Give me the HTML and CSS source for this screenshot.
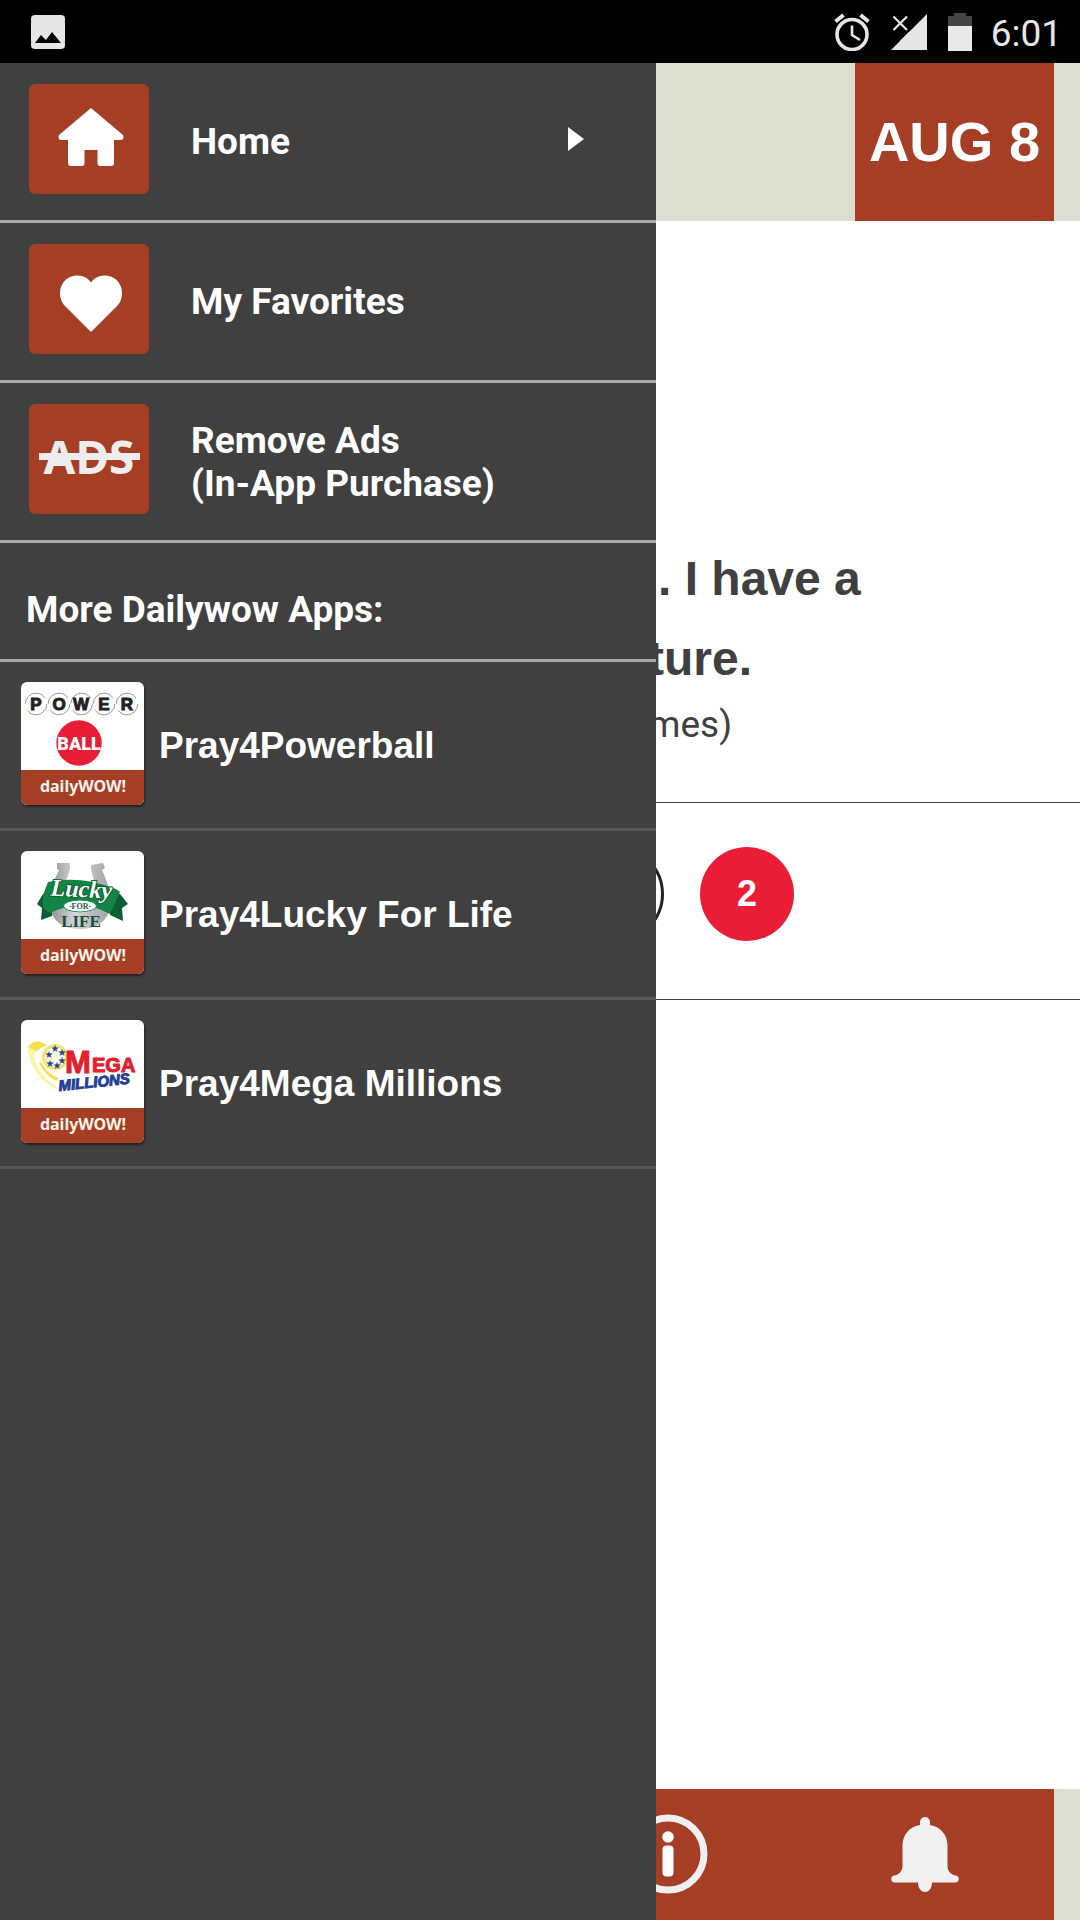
FILE: index.html
```html
<!DOCTYPE html>
<html lang="en">
<head>
<meta charset="utf-8">
<meta name="viewport" content="width=device-width, initial-scale=1">
<title>dailyWOW!</title>
<link rel="stylesheet" href="styles.css">
</head>
<body>
<div class="app">
  <div class="status">
    <svg class="status-picture" width="34" height="34" viewBox="0 0 34 34" aria-hidden="true">
      <rect width="34" height="34" rx="4" fill="#e6e6e6"/>
      <path d="M4 28 10 20 15 25 21 17 30 28z" fill="#000"/>
    </svg>
    <svg width="36" height="38" viewBox="0 0 36 38" aria-hidden="true">
      <g fill="none" stroke="#e6e6e6">
        <circle cx="18" cy="21.500" r="15" stroke-width="3.600"/>
        <path d="M18 12.500V22l8 5" stroke-width="2.600"/>
        <path d="M1.500 8.500 9.500 2M34.500 8.500 26.500 2" stroke-width="4"/>
      </g>
    </svg>
    <svg class="status-signal" width="36" height="38" viewBox="0 0 36 38" aria-hidden="true">
      <path d="M0 37 36 1V37z" fill="#e6e6e6"/>
      <path d="M0 0H18V17L9 26 0 20z" fill="#000"/>
      <path d="M18 19 9 28 18 28z" fill="#e6e6e6"/>
      <path d="M2.500 3.500 16 17M16 3.500 2.500 17" stroke="#e6e6e6" stroke-width="2.200" fill="none"/>
    </svg>
    <svg class="status-battery" width="24" height="38" viewBox="0 0 24 38" aria-hidden="true">
      <path d="M0 3H6V0H18V3H24V14H0z" fill="#444"/>
      <path d="M0 13H24V38H0z" fill="#e9e9e9"/>
    </svg>
    <span class="time">6:01</span>
  </div>

  <div class="body">
    <main class="page">
      <header class="page-head"><h1 class="date">AUG 8</h1></header>
      <section class="quote">
        <p class="quote-text">. I have a<br>ture.</p>
        <p class="quote-note">mes)</p>
      </section>
      <section class="balls">
        <span class="ball"></span>
        <span class="ball ball-red">2</span>
      </section>
      <footer class="tabs">
        <button class="tab tab-info" type="button" aria-label="Info">
          <svg width="80" height="80" viewBox="0 0 80 80">
            <circle cx="40" cy="40" r="36" fill="none" stroke="#f0f0f0" stroke-width="7"/>
            <circle cx="40" cy="23" r="5.800" fill="#fff"/>
            <rect x="34.500" y="31.500" width="11" height="31" rx="4" fill="#fff"/>
          </svg>
        </button>
        <button class="tab" type="button" aria-label="Reminders">
          <svg width="70" height="76" viewBox="0 0 70 76">
            <path fill="#f0f0f0" d="M30 9V6a5 5 0 0 1 10 0V9C51 11 57.500 19 57.500 30V50C57.500 55 61 59 66 59.500A3.600 3.600 0 0 1 66 66.500H42C42 72 39 76 35 76S28 72 28 66.500H4A3.600 3.600 0 0 1 4 59.500C9 59 12.500 55 12.500 50V30C12.500 19 19 11 30 9z"/>
          </svg>
        </button>
      </footer>
    </main>

    <nav class="drawer" aria-label="Menu">
      <a class="item" href="#home">
        <span class="tile">
          <svg width="120" height="110" viewBox="-29 -23 120 110" aria-hidden="true">
            <path fill="#fff" d="M33 1 65 28Q67 33 62 33H56V56Q56 59 53 59H42Q39.500 59 39.500 56V43H26.500V56Q26.500 59 24 59H13Q10 59 10 56V33H4Q-1 33 1 28z"/>
          </svg>
        </span>
        <span class="label">Home</span>
        <svg class="arrow" width="16" height="24" viewBox="0 0 16 24" aria-hidden="true"><path d="M0 0 16 12 0 24z" fill="#fff"/></svg>
      </a>
      <a class="item" href="#favorites">
        <span class="tile">
          <svg width="120" height="110" viewBox="-29 -27 120 110" aria-hidden="true">
            <path fill="#fff" d="M33 61 6 34C-2 24 2 6 18 4.500 25 4 30 7 33 11.500 36 7 41 4 48 4.500 64 6 68 24 60 34z"/>
          </svg>
        </span>
        <span class="label">My Favorites</span>
      </a>
      <a class="item" href="#remove-ads">
        <span class="tile">
          <svg width="120" height="110" viewBox="0 0 120 110" aria-hidden="true">
            <text x="60" y="70" text-anchor="middle" class="ads">ADS</text>
            <path d="M10 49H111V56H10z" fill="#ededed"/>
          </svg>
        </span>
        <span class="label">Remove Ads<br>(In-App Purchase)</span>
      </a>
      <h2 class="section">More Dailywow Apps:</h2>
      <a class="app-item" href="#powerball">
        <svg class="logo" width="123" height="123" viewBox="0 0 123 123" aria-hidden="true">
          <path d="M0 0H123V123H0z" fill="#fff"/>
          <g fill="none" stroke="#999" stroke-dasharray="27 7">
            <circle cx="15" cy="22" r="10.800"/><circle cx="38" cy="22" r="10.800"/><circle cx="60.500" cy="22" r="10.800"/><circle cx="83" cy="22" r="10.800"/><circle cx="106" cy="22" r="10.800"/>
          </g>
          <g class="power">
            <text x="15" y="28">P</text><text x="38" y="28">O</text><text x="60" y="28">W</text><text x="83" y="28">E</text><text x="106" y="28">R</text>
          </g>
          <circle cx="58" cy="61" r="22.700" fill="#e91d35"/>
          <text x="58" y="68" class="ball-word">BALL</text>
          <path d="M0 88H123V123H0z" fill="#a53e24"/>
          <text x="62" y="110" class="wow">dailyWOW!</text>
        </svg>
        <span class="app-name">Pray4Powerball</span>
      </a>
      <a class="app-item" href="#lucky">
        <svg class="logo" width="123" height="123" viewBox="0 0 123 123" aria-hidden="true">
          <defs><linearGradient id="steel"><stop offset="0" stop-color="#8d8d92"/><stop offset=".4" stop-color="#d5d5d9"/><stop offset="1" stop-color="#a2a2a7"/></linearGradient></defs>
          <path d="M0 0H123V123H0z" fill="#fff"/>
          <path d="M36 12H49V18L45 30C36 49 42 62 59 62S82 49 73 30L70 18V14L82 12 84 17 81 19C99 57 87 78 59 78S19 57 38 19L36 18z" fill="url(#steel)"/>
          <path d="M22 43 16 53 21 57 20 69 31 65V43zM99 43 107 53 101 57 102 70 89 64V43z" fill="#0b6032"/>
          <path d="M27 31Q60 24 95 38L99 41 89 63Q60 47 29 62L22 57 22 44z" fill="#128443"/>
          <ellipse cx="59" cy="55" rx="16.500" ry="6" fill="#fff" stroke="#128443" stroke-width="1"/>
          <g transform="rotate(3 60 45)"><text x="60" y="46" class="lucky">Lucky</text></g>
          <text x="59" y="58" class="lucky-for">-FOR-</text>
          <text x="60" y="76" class="lucky-life">LIFE</text>
          <path d="M0 88H123V123H0z" fill="#a53e24"/>
          <text x="62" y="110" class="wow">dailyWOW!</text>
        </svg>
        <span class="app-name">Pray4Lucky For Life</span>
      </a>
      <a class="app-item" href="#mega">
        <svg class="logo" width="123" height="123" viewBox="0 0 123 123" aria-hidden="true">
          <path d="M0 0H123V123H0z" fill="#fff"/>
          <path d="M24 25C12 17 5 24 8 36 12 53 25 66 41 71 24 60 11 45 14 33Z" fill="#fdf3a8"/>
          <path d="M7 27Q15 17 26 25L14 31zM20 42Q26 54 38 58L35 61Q23 54 18 43z" fill="#f4e04a"/>
          <circle cx="34" cy="37" r="13" fill="#f6e56a"/>
          <circle cx="34" cy="37" r="10" fill="#fffbe0"/>
          <g class="stars"><text x="34" y="32">★</text><text x="41" y="36">★</text><text x="41" y="44">★</text><text x="36" y="49">★</text><text x="29" y="47">★</text><text x="28" y="38">★</text></g>
          <g class="mega"><text x="44" y="53" class="mega-m">M</text><text x="71" y="52" class="mega-ega">EGA</text></g>
          <g transform="rotate(-6 38 71)"><text x="38" y="71" class="millions">MILLIONS</text></g>
          <path d="M0 88H123V123H0z" fill="#a53e24"/>
          <text x="62" y="110" class="wow">dailyWOW!</text>
        </svg>
        <span class="app-name">Pray4Mega Millions</span>
      </a>
    </nav>
  </div>
</div>
</body>
</html>
```
FILE: styles.css
```css
* { box-sizing: border-box; }
body { margin: 0; font-family: Roboto, sans-serif; color: #404040; background: #fff; }
h1, h2, p { margin: 0; }
a { color: inherit; text-decoration: none; }

.app { min-height: 100vh; display: flex; flex-direction: column; }

.status {
  height: 63px; padding: 0 18px 0 31px; background: #000; color: #e6e6e6;
  display: flex; align-items: center;
}
.status-picture { margin-right: auto; }
.status-signal { margin-left: 21px; }
.status-battery { margin-left: 21px; margin-right: 19px; }
.time { font-size: 37px; line-height: 44px; padding-top: 4px; }

.body { flex: 1; position: relative; display: flex; }
.page { flex: 1; display: flex; flex-direction: column; overflow: hidden; }

.page-head { height: 158px; padding-right: 26px; background: #dbddcf; display: flex; justify-content: flex-end; }
.date {
  width: 199px; background: #a53e24; color: #fff;
  display: flex; align-items: center; justify-content: center;
  font: bold 56px/64px "Liberation Sans", sans-serif;
}

.quote { padding: 318px 0 51px 60%; }
.quote-text { font: bold 48px/80px "Liberation Sans", sans-serif; text-indent: 10px; white-space: nowrap; }
.quote-note { font-size: 37px; line-height: 52px; }

.balls {
  height: 198px; padding-left: 568px; border: 1px solid #404040; border-width: 1px 0;
  display: flex; align-items: center; gap: 36px; padding-bottom: 14px;
}
.ball {
  width: 96px; height: 96px; border: 3px solid #222; border-radius: 50%;
  display: flex; align-items: center; justify-content: center;
  font: bold 36px/40px "Liberation Sans", sans-serif;
}
.ball-red { border: 0; width: 94px; height: 94px; background: #e91d35; color: #fff; }

.tabs {
  height: 131px; margin-top: auto; background: #a53e24; border-right: 26px solid #dbddcf; padding: 0 1px 2px 25px;
  display: grid; grid-template-columns: repeat(4, 1fr);
}
.tab { border: 0; padding: 0; background: none; display: flex; align-items: center; justify-content: center; }
.tab-info { grid-column: 3; }

.drawer { position: absolute; top: 0; bottom: 0; left: 0; width: 656px; background: #404040; color: #fff; }
.item {
  height: 160px; padding: 0 72px 5px 29px; border-bottom: 3px solid #a9a9a9;
  display: flex; align-items: center;
}
.tile {
  width: 120px; height: 110px; border-radius: 6px; background: #a53e24;
  display: flex; align-items: center; justify-content: center;
}
.label { margin-left: 42px; padding-top: 5px; font-size: 37px; font-weight: bold; line-height: 43px; }
.arrow { margin-left: auto; }
.section {
  height: 119px; padding: 17px 26px 0; border-bottom: 3px solid #a9a9a9;
  display: flex; align-items: center; font-size: 37px; line-height: 43px;
}
.app-item { height: 169px; padding: 0 21px 3px; border-bottom: 3px solid #585858; display: flex; align-items: center; }
.logo { border-radius: 6px; box-shadow: 1px 2px 2px #222; }
.app-name { margin-left: 15px; padding-top: 4px; font: bold 37px/40px "Liberation Sans", sans-serif; }

.ads { font: bold 46px "Noto Sans", sans-serif; fill: #ededed; }
.wow { font: bold 16px "Noto Sans", sans-serif; fill: #fff3ea; text-anchor: middle; }
.power { font: bold 17px "Liberation Sans", sans-serif; fill: #222; stroke: #222; stroke-width: 1px; text-anchor: middle; }
.ball-word { font: 900 18px Roboto, sans-serif; fill: #fff; text-anchor: middle; }
.lucky { font: italic bold 24px "Liberation Serif", serif; fill: #fff; stroke: #0b6032; stroke-width: 2px; paint-order: stroke; text-anchor: middle; }
.lucky-for { font: bold 8px "Liberation Serif", serif; fill: #0b6032; text-anchor: middle; }
.lucky-life { font: bold 17px "Liberation Serif", serif; fill: #174f33; text-anchor: middle; }
.stars { font: 10px "DejaVu Sans", sans-serif; fill: #263f98; text-anchor: middle; }
.mega { font-family: "Liberation Sans", sans-serif; font-weight: bold; fill: #e3202c; stroke: #e3202c; stroke-width: 1px; }
.mega-m { font-size: 31px; }
.mega-ega { font-size: 20px; }
.millions { font: italic bold 15px "Liberation Sans", sans-serif; fill: #263f98; stroke: #263f98; stroke-width: 1px; }
```
